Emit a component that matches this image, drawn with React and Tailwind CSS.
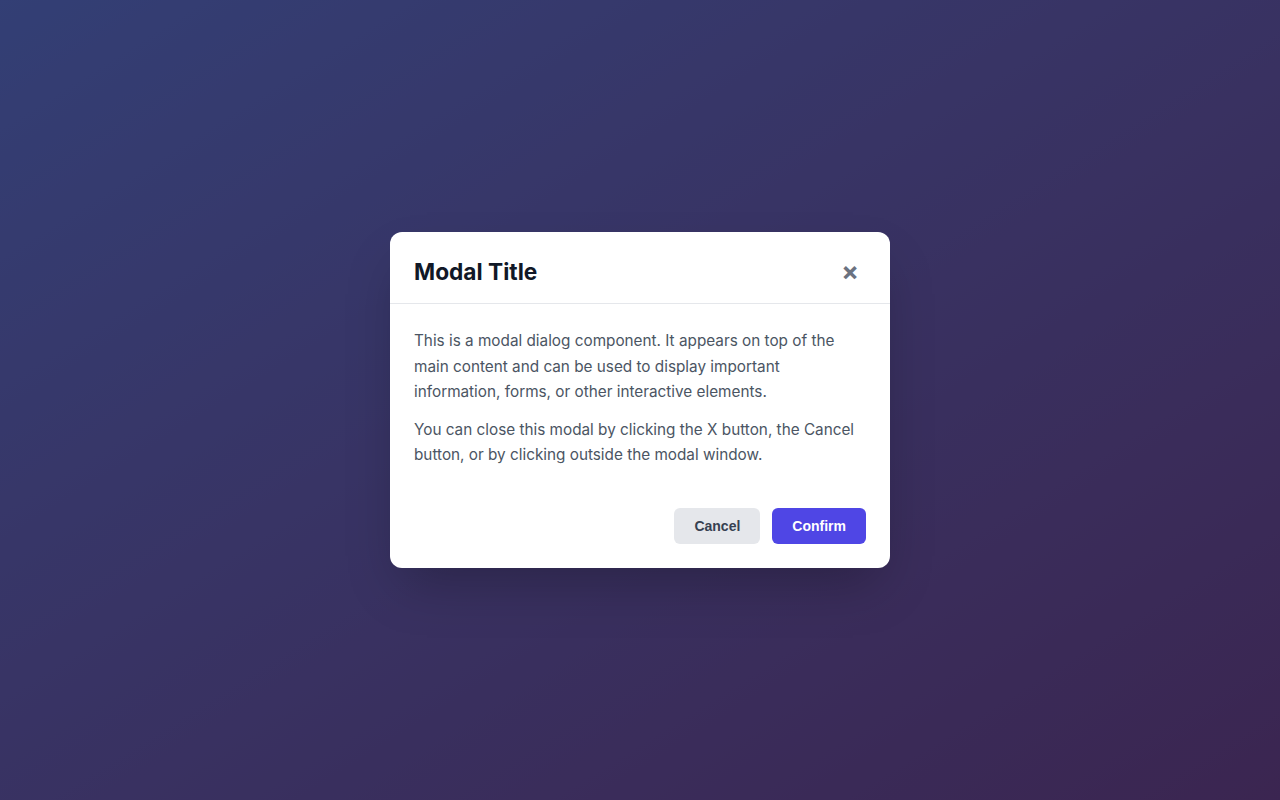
export default function App() {
  return (
    <div className="relative min-h-screen w-full bg-gradient-to-br from-[#667eea] to-[#764ba2] font-['Inter',sans-serif]">
      <div className="flex min-h-screen w-full items-center justify-center bg-black/50">
        <div className="w-[500px] rounded-xl bg-white shadow-2xl">
          <div className="flex h-[72px] items-center justify-between border-b border-[#e5e7eb] px-6 pt-2">
            <h2 className="text-[22.7px] font-bold leading-7 text-[#111827]">Modal Title</h2>
            <button className="flex h-8 w-8 items-center justify-center rounded text-[26px] font-bold leading-none text-[#6b7280]">
              ×
            </button>
          </div>
          <div className="px-6 pt-6 pb-6 text-[15.3px] leading-[25.6px] text-[#4b5563]">
            <p className="mb-3">
              This is a modal dialog component. It appears on top of the main content and can be used to display
              important information, forms, or other interactive elements.
            </p>
            <p>
              You can close this modal by clicking the X button, the Cancel button, or by clicking outside the modal
              window.
            </p>
          </div>
          <div className="flex justify-end gap-3 px-6 pt-4 pb-6 font-['Liberation_Sans',Arial,sans-serif] text-sm font-bold">
            <button className="h-9 rounded-md bg-[#e5e7eb] px-5 text-[#374151]">Cancel</button>
            <button className="h-9 rounded-md bg-[#4f46e5] px-5 text-white">Confirm</button>
          </div>
        </div>
      </div>
    </div>
  );
}
